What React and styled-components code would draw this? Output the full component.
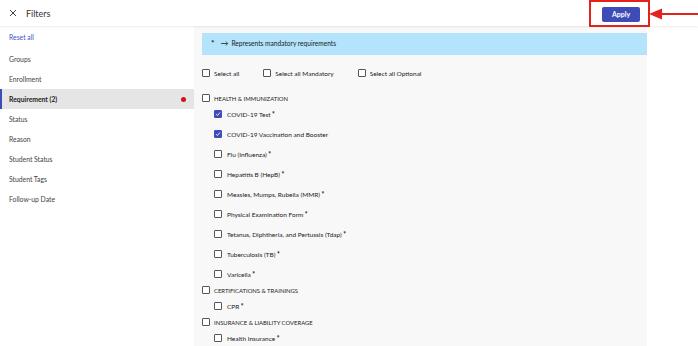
import React from "react";
import styled, { createGlobalStyle } from "styled-components";

const GlobalStyle = createGlobalStyle`
  html, body { margin: 0; padding: 0; background: #ffffff; }
  body { font-family: "Lato", "Noto Sans", sans-serif; color: #333; }
  * { box-sizing: border-box; }
`;

const Page = styled.div`
  width: 698px;
  height: 346px;
  overflow: hidden;
  display: flex;
  flex-direction: column;
  position: relative;
  background: #fff;
`;

const Header = styled.header`
  height: 26px;
  flex: none;
  display: flex;
  align-items: center;
  padding: 0 58px 0 9px;
  background: #fff;
  box-shadow: 0 1px 2px rgba(0, 0, 0, 0.08);
  position: relative;
  z-index: 1;
`;

const CloseBtn = styled.span`
  display: flex;
  width: 8px;
  height: 8px;
  margin-right: 9px;
`;

const Title = styled.h1`
  margin: 0;
  font-size: 9px;
  font-weight: 400;
  color: #333;
  flex: 1;
`;

const ApplyButton = styled.button`
  width: 38px;
  height: 15px;
  border: none;
  border-radius: 2px;
  background: #3d4cb6;
  color: #fff;
  font-family: inherit;
  font-size: 7px;
  font-weight: 700;
  padding: 0;
  margin-top: 2px;
`;

const Annotation = styled.div`
  position: absolute;
  left: 589px;
  top: 0;
  width: 61px;
  height: 27px;
  border: 2px solid #e3221b;
  z-index: 3;
`;

const Arrow = styled.svg`
  position: absolute;
  left: 649px;
  top: 7px;
  z-index: 3;
`;

const Body = styled.div`
  flex: 1;
  display: flex;
  min-height: 0;
`;

const Sidebar = styled.nav`
  width: 194px;
  flex: none;
  padding-top: 1px;
  display: flex;
  flex-direction: column;
`;

const ResetLink = styled.div`
  height: 20px;
  margin-bottom: 2px;
  display: flex;
  align-items: center;
  padding-left: 9px;
  font-size: 6.8px;
  color: #4450c4;
`;

const NavItem = styled.div`
  height: 20px;
  display: flex;
  align-items: center;
  justify-content: space-between;
  padding: 0 8px 0 ${(p) => (p.$active ? "7px" : "9px")};
  font-size: 6.8px;
  color: ${(p) => (p.$active ? "#222" : "#444")};
  font-weight: ${(p) => (p.$active ? 700 : 400)};
  background: ${(p) => (p.$active ? "#e5e5e5" : "transparent")};
  border-left: ${(p) => (p.$active ? "2px solid #3d4cb6" : "none")};
`;

const Dot = styled.span`
  width: 5px;
  height: 5px;
  border-radius: 50%;
  background: #d0131d;
`;

const Content = styled.main`
  width: 453px;
  flex: none;
  background: #f8f8f8;
  padding: 7px 0 0 8px;
  display: flex;
  flex-direction: column;
`;

const Banner = styled.div`
  height: 25px;
  background: #b3e4fb;
  display: flex;
  align-items: flex-start;
  padding: 6px 0 0 9px;
  font-size: 6.6px;
  color: #222;
  gap: 6px;
`;

const Star = styled.span`
  font-weight: 700;
  font-size: 8px;
  line-height: 9px;
`;

const ArrowGlyph = styled.span`
  font-size: 8px;
  line-height: 8px;
  margin-right: 3px;
`;

const SelectRow = styled.div`
  display: flex;
  align-items: center;
  gap: 24px;
  margin-top: 13px;
  height: 10px;
`;

const List = styled.div`
  display: flex;
  flex-direction: column;
  margin-top: 12px;
`;

const Group = styled.div`
  display: flex;
  flex-direction: column;
`;

const Items = styled.div`
  display: flex;
  flex-direction: column;
  gap: 4px;
  padding-left: 12px;
`;

const Row = styled.label`
  height: 16px;
  display: flex;
  align-items: center;
  gap: ${(p) => (p.$inner ? "5px" : "4px")};
  font-size: ${(p) => (p.$caps ? "5.9px" : "6.5px")};
  color: #222;
  text-transform: ${(p) => (p.$caps ? "uppercase" : "none")};
`;

const Box = styled.span`
  width: 8px;
  height: 8px;
  flex: none;
  border-radius: 1px;
  border: 1px solid ${(p) => (p.$checked ? "#3d4cb6" : "#555")};
  background: ${(p) => (p.$checked ? "#3d4cb6" : "#fff")};
  display: flex;
  align-items: center;
  justify-content: center;
`;

const Req = styled.span`
  font-weight: 900;
  font-size: 6.5px;
  margin-left: 1.5px;
`;

function Check({ checked }) {
  return (
    <Box $checked={checked}>
      {checked && (
        <svg width="6" height="6" viewBox="0 0 6 6">
          <path d="M1 3.1 L2.4 4.5 L5 1.5" fill="none" stroke="#fff" strokeWidth="0.9" />
        </svg>
      )}
    </Box>
  );
}

const groups = [
  {
    title: "Health & Immunization",
    items: [
      { label: "COVID-19 Test", req: true, checked: true },
      { label: "COVID-19 Vaccination and Booster", checked: true },
      { label: "Flu (Influenza)", req: true },
      { label: "Hepatitis B (HepB)", req: true },
      { label: "Measles, Mumps, Rubella (MMR)", req: true },
      { label: "Physical Examination Form", req: true },
      { label: "Tetanus, Diphtheria, and Pertussis (Tdap)", req: true },
      { label: "Tuberculosis (TB)", req: true },
      { label: "Varicella", req: true },
    ],
  },
  { title: "Certifications & Trainings", items: [{ label: "CPR", req: true }] },
  { title: "Insurance & Liability Coverage", items: [{ label: "Health Insurance", req: true }] },
];

const navItems = [
  "Groups",
  "Enrollment",
  "Requirement (2)",
  "Status",
  "Reason",
  "Student Status",
  "Student Tags",
  "Follow-up Date",
];

export default function App() {
  return (
    <Page>
      <GlobalStyle />
      <Header>
        <CloseBtn>
          <svg width="8" height="8" viewBox="0 0 8 8">
            <path d="M1 1 L7 7 M7 1 L1 7" stroke="#444" strokeWidth="1" />
          </svg>
        </CloseBtn>
        <Title>Filters</Title>
        <ApplyButton>Apply</ApplyButton>
      </Header>
      <Annotation />
      <Arrow width="49" height="14" viewBox="0 0 49 14">
        <path d="M0 7 L13 1.5 L13 12.5 Z" fill="#e3221b" />
        <path d="M10 7 L49 7" stroke="#e3221b" strokeWidth="2" />
      </Arrow>
      <Body>
        <Sidebar>
          <ResetLink>Reset all</ResetLink>
          {navItems.map((n) => (
            <NavItem key={n} $active={n.startsWith("Requirement")}>
              <span>{n}</span>
              {n.startsWith("Requirement") && <Dot />}
            </NavItem>
          ))}
        </Sidebar>
        <Content>
          <Banner>
            <Star>*</Star>
            <span>
              <ArrowGlyph>→</ArrowGlyph>Represents mandatory requirements
            </span>
          </Banner>
          <SelectRow>
            <Row>
              <Check />
              Select all
            </Row>
            <Row>
              <Check />
              Select all Mandatory
            </Row>
            <Row>
              <Check />
              Select all Optional
            </Row>
          </SelectRow>
          <List>
            {groups.map((g) => (
              <Group key={g.title}>
                <Row $caps>
                  <Check />
                  {g.title}
                </Row>
                <Items>
                  {g.items.map((it) => (
                    <Row $inner key={it.label}>
                      <Check checked={it.checked} />
                      <span>
                        {it.label}
                        {it.req && <Req>*</Req>}
                      </span>
                    </Row>
                  ))}
                </Items>
              </Group>
            ))}
          </List>
        </Content>
      </Body>
    </Page>
  );
}
